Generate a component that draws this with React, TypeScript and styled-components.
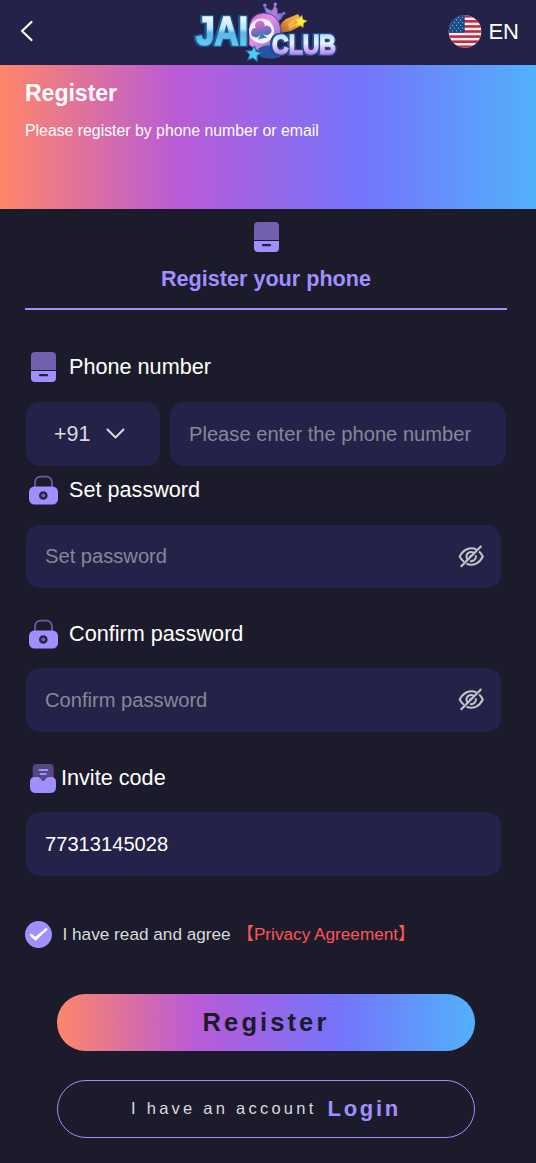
import React from "react";
import styled, { createGlobalStyle } from "styled-components";

const GRADIENT = "linear-gradient(90deg, #ff8669 0%, #ba5bd6 33%, #7573fb 67%, #52b1fc 100%)";

const GlobalStyle = createGlobalStyle`
  * { box-sizing: border-box; }
  body {
    margin: 0;
    background: #1c1b2b;
    font-family: "Liberation Sans", Arial, "Noto Sans CJK SC", sans-serif;
    color: #fff;
  }
  button, input { font: inherit; color: inherit; border: 0; background: none; padding: 0; }
  svg { display: block; flex: none; overflow: visible; }
`;

const Page = styled.div`
  width: 536px;
  height: 1163px;
  overflow: hidden;
  background: #1c1b2b;
`;

const TopBar = styled.header`
  height: 65px;
  background: #242248;
  display: grid;
  grid-template-columns: 190px 152px 1fr;
  align-items: center;
`;

const BackButton = styled.button`
  width: 50px;
  height: 50px;
  padding-left: 19px;
  margin-top: -3px;
`;

const Language = styled.div`
  display: flex;
  align-items: center;
  justify-content: flex-end;
  gap: 7px;
  padding-right: 17px;
  font-size: 22px;
  line-height: 26px;
  margin-top: -2px;
`;

const Banner = styled.section`
  height: 144px;
  padding: 14px 25px;
  background: ${GRADIENT};
`;

const Title = styled.h1`
  margin: 0;
  font-size: 23px;
  line-height: 28px;
`;

const Subtitle = styled.p`
  margin: 14px 0 0;
  font-size: 15.84px;
  line-height: 20px;
`;

const Content = styled.main`
  padding: 0 29px 0 25px;
`;

const Tab = styled.div`
  height: 101px;
  padding-top: 12px;
  border-bottom: 2px solid #a08fff;
  display: flex;
  flex-direction: column;
  align-items: center;
  gap: 13px;
  color: #a08fff;
  font-size: 21.6px;
  font-weight: 700;
  line-height: 26px;
`;

const Field = styled.section<{ $top: number }>`
  margin-top: ${(p) => p.$top}px;
`;

const Label = styled.label<{ $gap: number; $space: number }>`
  display: flex;
  align-items: center;
  gap: ${(p) => p.$gap}px;
  height: 32px;
  margin-bottom: ${(p) => p.$space}px;
  padding-left: 2px;
  font-size: 21.65px;
`;

const FieldRow = styled.div`
  display: flex;
  gap: 10px;
  padding: 0 1px;
`;

const Box = styled.div<{ $width: number; $height?: number }>`
  width: ${(p) => p.$width}px;
  height: ${(p) => p.$height ?? 64}px;
  border-radius: 14px;
  background: #242248;
  display: flex;
  align-items: center;
  padding: 0 16px 0 19px;
`;

const CodeBox = styled(Box)`
  padding: 0 0 0 28px;
  gap: 16px;
  font-size: 21.5px;
  color: #d9d9df;
`;

const Input = styled.input`
  flex: 1;
  min-width: 0;
  height: 100%;
  outline: 0;
  font-size: 20.15px;
  &::placeholder { color: #888797; opacity: 1; }
`;

const Agreement = styled.div`
  display: flex;
  align-items: center;
  height: 28px;
  margin-top: 44px;
  font-size: 17.2px;
  color: #d9d9df;
  white-space: nowrap;
`;

const AgreementText = styled.span`
  margin-left: 10.5px;
`;

const Link = styled.span`
  color: #ff5555;
  margin-left: 6px;
  line-height: 24px;
  padding-bottom: 1px;
`;

const Actions = styled.div`
  display: flex;
  flex-direction: column;
  gap: 29px;
  padding: 0 32px;
  margin-top: 46px;
`;

const RegisterButton = styled.button`
  height: 57px;
  border-radius: 29px;
  background: ${GRADIENT};
  color: #1c1b2b;
  font-size: 25.5px;
  font-weight: 700;
  letter-spacing: 3.1px;
`;

const LoginButton = styled.button`
  height: 58px;
  border: 1px solid #a08fff;
  border-radius: 29px;
  display: flex;
  justify-content: center;
  align-items: center;
  gap: 11px;
  color: #d9d9df;
  font-size: 16.5px;
  letter-spacing: 3.25px;
  padding-bottom: 1px;
`;

const LoginText = styled.strong`
  color: #a08fff;
  font-size: 22px;
  letter-spacing: 2.7px;
`;

const PhoneIcon = () => (
  <svg width="32" height="32" viewBox="0 0 32 32">
    <path d="M4 19V5q0-4 4-4h17q4 0 4 4v14z" fill="#7060ae" />
    <path d="M4 20h25v7q0 4-4 4H8q-4 0-4-4z" fill="#a08fff" />
    <path d="M13 24.2h7" stroke="#242238" strokeWidth="2.2" strokeLinecap="round" />
  </svg>
);

const LockIcon = () => (
  <svg width="32" height="32" viewBox="0 0 32 32">
    <path d="M8 13V9.5C8 5 10.5 2.7 14 2.7h5c3.5 0 6 2.3 6 6.800V13" fill="none" stroke="#6a5ba6" strokeWidth="1.8" />
    <rect x="2" y="12.5" width="29" height="18" rx="5.5" fill="#a08fff" />
    <circle cx="16.3" cy="21.5" r="3.2" fill="#7060ae" stroke="#242238" strokeWidth="2.2" />
  </svg>
);

const InviteIcon = () => (
  <svg width="32" height="32" viewBox="0 0 32 32">
    <path d="M5.7 18V6q0-4 4-4h13q4 0 4 4v12z" fill="#544883" />
    <path d="M12.5 8h8M13.5 12h5.500" stroke="#a08fff" strokeWidth="1.8" strokeLinecap="round" />
    <path d="M3 20q0-5 5-5h2.500q2 0 3 1.600 2.700 4.400 5.500 0 1-1.600 3-1.600H24q5 0 5 5v5q0 6-6 6H9q-6 0-6-6z" fill="#a08fff" />
  </svg>
);

const EyeOffIcon = () => (
  <svg width="27" height="24" viewBox="0 0 27 24" fill="none" stroke="#c3c3c8" strokeWidth="2">
    <path d="M18.300 4.300C12 1.300 5 4.800 1.700 11.500q1.500 3 4.300 5.300M8.500 18.700c7 2.700 13.300-.7 16.300-7.200q-1.200-2.700-3.700-5" />
    <path d="M15.800 7.800C12 5.500 8.200 8.400 8.500 12q.1 1.400 1 2.500M12 16.100c3.700.8 6.600-2.300 5.800-5.800" />
    <path d="M2.800 21.800 23.300 1" strokeWidth="2.2" />
    <path d="m11.500 12.300 2-2" />
  </svg>
);

const STAR = "M0-10 2.900-3.700 9.700-3 4.700 1.700 6 8.500 0 5.200-6 8.500-4.700 1.700-9.700-3-2.900-3.700Z";

const LogoWord = styled.text<{ $outline: string }>`
  font-family: "Liberation Sans", Arial, sans-serif;
  font-weight: 700;
  stroke-linejoin: miter;
  filter: drop-shadow(1.2px 0 0 ${(p) => p.$outline}) drop-shadow(-1.2px 0 0 ${(p) => p.$outline})
    drop-shadow(0 1.3px 0 ${(p) => p.$outline}) drop-shadow(0 -1px 0 ${(p) => p.$outline});
`;

const Logo = () => (
  <svg width="152" height="65" viewBox="190 0 152 65">
    <defs>
      <linearGradient id="ice" gradientUnits="userSpaceOnUse" x1="0" y1="15" x2="0" y2="46">
        <stop offset="0" stopColor="#f4fcff" />
        <stop offset=".45" stopColor="#b9e3f6" />
        <stop offset=".58" stopColor="#5eb5e6" />
        <stop offset="1" stopColor="#66cbea" />
      </linearGradient>
      <linearGradient id="lilac" gradientUnits="userSpaceOnUse" x1="0" y1="33" x2="0" y2="55">
        <stop offset="0" stopColor="#a9dff7" />
        <stop offset=".45" stopColor="#eff2ff" />
        <stop offset="1" stopColor="#b47ee3" />
      </linearGradient>
      <linearGradient id="ring" x1="0" y1="0" x2="1" y2="1">
        <stop offset="0" stopColor="#d16bd0" />
        <stop offset=".4" stopColor="#e391db" />
        <stop offset="1" stopColor="#6272d8" />
      </linearGradient>
      <linearGradient id="club" x1="0" y1="0" x2="0" y2="1">
        <stop offset="0" stopColor="#d774c9" />
        <stop offset=".6" stopColor="#7d68bc" />
        <stop offset="1" stopColor="#1683b9" />
      </linearGradient>
      <linearGradient id="comet" x1="0" y1="1" x2="1" y2="0">
        <stop offset="0" stopColor="#a4562d" />
        <stop offset=".5" stopColor="#f19b30" />
        <stop offset="1" stopColor="#e9bd69" />
      </linearGradient>
      <linearGradient id="crown" x1="0" y1="0" x2="1" y2="0">
        <stop offset="0" stopColor="#6f80e2" />
        <stop offset=".5" stopColor="#bf79d5" />
        <stop offset="1" stopColor="#6b68cb" />
      </linearGradient>
    </defs>
    <path d="M266 13 264 6 269 9.500 272 10.500 273.500 8 274.500 4.500 277.500 9.500 277.500 13.500 281 13.500 284.500 12.500 281 19 278.500 21Q273 15 266 13Z" fill="url(#crown)" stroke="#5252ad" strokeWidth=".6" />
    <circle cx="264.800" cy="5.200" r="1.700" fill="#7d83e8" />
    <circle cx="275.300" cy="4.300" r="1.700" fill="#b47ad8" />
    <circle cx="283.800" cy="13.300" r="1.600" fill="#7c6dce" />
    <path d="M280 33q-2-9 6-14l12-5 6 10-13 7z" fill="url(#comet)" />
    <path d="m288 24 10-7-6 8 8-3-11 8z" fill="#ffe9a0" opacity=".35" />
    <path d={STAR} transform="translate(300.500 21.500) rotate(12) scale(.63)" fill="#fff230" stroke="#f0a832" strokeWidth="1" />
    <path d="M249 45V31q0-17 14-18 16 0 18 17l-4 17-16 6z" fill="url(#ring)" stroke="#453c97" strokeWidth=".8" />
    <path d="M258 49q9-7 22-1v9q-9 3-19 0z" fill="#2554a2" />
    <circle cx="261.500" cy="31" r="12.500" fill="#f7eefc" />
    <path transform="rotate(-12 261 31)" fill="url(#club)" d="M259.800 33.500a4.700 4.700 0 1 1-3.200-6.500 4.800 4.800 0 1 1 9 0 4.700 4.700 0 1 1-3.200 6.500q.3 3 3.600 5h-10q3.500-2 3.800-5z" />
    <LogoWord $outline="#185d9b" x="196" y="45.2" fontSize="41" textLength="52" lengthAdjust="spacingAndGlyphs" fill="url(#ice)" stroke="url(#ice)" strokeWidth="1.6">JAI</LogoWord>
    <LogoWord $outline="#224b96" x="272" y="54" fontSize="27" textLength="64" lengthAdjust="spacingAndGlyphs" fill="url(#lilac)" stroke="url(#lilac)" strokeWidth="1.5">CLUB</LogoWord>
    <path d={STAR} transform="translate(253.500 54) rotate(8) scale(.8)" fill="#51c9ee" stroke="#1e6bb3" strokeWidth="1.2" />
  </svg>
);

const Flag = () => (
  <svg width="33" height="33" viewBox="0 0 33 33">
    <defs>
      <clipPath id="disc"><circle cx="17" cy="16.5" r="16.3" /></clipPath>
    </defs>
    <g clipPath="url(#disc)">
      <rect width="34" height="33" fill="#f5eef2" />
      {[0, 1, 2, 3, 4, 5, 6].map((i) => (
        <rect key={i} y={i * 5.08} width="34" height="2.54" fill="#bf2740" />
      ))}
      <rect width="16.7" height="17.7" fill="#164a87" />
      {[0, 1, 2, 3, 4, 5].map((r) =>
        [0, 1, 2, 3].map((c) => (
          <circle key={`${r}-${c}`} cx={(r % 2 ? 0.5 : 2.5) + c * 4} cy={2.3 + r * 2.7} r=".65" fill="#a9bfd9" />
        ))
      )}
    </g>
  </svg>
);

const CheckIcon = () => (
  <svg width="27" height="27" viewBox="0 0 27 27">
    <circle cx="13.5" cy="13.5" r="13.5" fill="#a08fff" />
    <path d="m6 13.200 4.500 3.300L21.300 7.500l.7.800-11.500 10.900L5.200 14z" fill="#fff" stroke="#fff" strokeWidth="1.1" strokeLinejoin="round" />
  </svg>
);

export default function App() {
  return (
    <Page>
      <GlobalStyle />
      <TopBar>
        <BackButton aria-label="Back">
          <svg width="16" height="24" viewBox="0 0 16 24" fill="none" stroke="#fff" strokeWidth="2.2" strokeLinecap="round" strokeLinejoin="round">
            <path d="M12.500 3 3 12l9.500 9" />
          </svg>
        </BackButton>
        <Logo />
        <Language><Flag />EN</Language>
      </TopBar>
      <Banner>
        <Title>Register</Title>
        <Subtitle>Please register by phone number or email</Subtitle>
      </Banner>
      <Content>
        <Tab><PhoneIcon />Register your phone</Tab>
        <Field $top={41}>
          <Label $gap={10} $space={19}><PhoneIcon />Phone number</Label>
          <FieldRow>
            <CodeBox $width={134}>
              +91
              <svg width="20" height="12" viewBox="0 0 20 12" fill="none" stroke="#d9d9df" strokeWidth="2" strokeLinecap="round" strokeLinejoin="round">
                <path d="m1.500 1.500 8 8 8-8" />
              </svg>
            </CodeBox>
            <Box $width={336}><Input placeholder="Please enter the phone number" /></Box>
          </FieldRow>
        </Field>
        <Field $top={8}>
          <Label $gap={10} $space={19}><LockIcon />Set password</Label>
          <FieldRow><Box $width={475} $height={63}><Input placeholder="Set password" /><EyeOffIcon /></Box></FieldRow>
        </Field>
        <Field $top={30}>
          <Label $gap={10} $space={18}><LockIcon />Confirm password</Label>
          <FieldRow><Box $width={475}><Input placeholder="Confirm password" /><EyeOffIcon /></Box></FieldRow>
        </Field>
        <Field $top={30}>
          <Label $gap={2} $space={18}><InviteIcon />Invite code</Label>
          <FieldRow><Box $width={475}><Input defaultValue="77313145028" /></Box></FieldRow>
        </Field>
        <Agreement>
          <CheckIcon />
          <AgreementText>I have read and agree</AgreementText>
          <Link>【Privacy Agreement】</Link>
        </Agreement>
        <Actions>
          <RegisterButton>Register</RegisterButton>
          <LoginButton>I have an account<LoginText>Login</LoginText></LoginButton>
        </Actions>
      </Content>
    </Page>
  );
}
